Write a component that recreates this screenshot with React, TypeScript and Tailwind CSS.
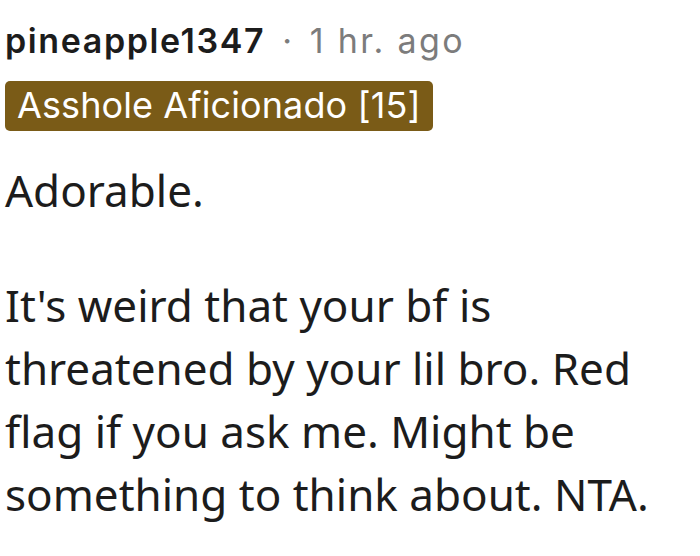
export default function App() {
  return (
    <div className="w-[700px] h-[556px] bg-white overflow-hidden pl-[5px] pt-[21px]">
      <div className="flex items-baseline text-[34px] leading-[40px] tracking-[1.6px] font-['Inter',sans-serif]">
        <span className="font-semibold text-[#1c1c1c]">pineapple1347</span>
        <span className="text-[#7c7c7c] ml-[17px]">·</span>
        <span className="text-[#7c7c7c] ml-[16px] tracking-[2.4px]">1 hr. ago</span>
      </div>
      <div className="mt-[20px] inline-flex h-[50px] items-center rounded-[5px] bg-[#7a5b17] px-[12px] pb-[3px] text-[36px] leading-[44px] tracking-[0.1px] text-white font-['Inter',sans-serif]">
        Asshole Aficionado [15]
      </div>
      <div className="mt-[28px] font-['Noto_Sans',sans-serif] text-[44px] leading-[63px] text-[#1c1c1c]">
        <p>Adorable.</p>
        <p className="mt-[52px] w-[680px]">
          It's weird that your bf is threatened by your lil bro. Red flag if you ask me. Might be something to think about. NTA.
        </p>
      </div>
    </div>
  );
}
